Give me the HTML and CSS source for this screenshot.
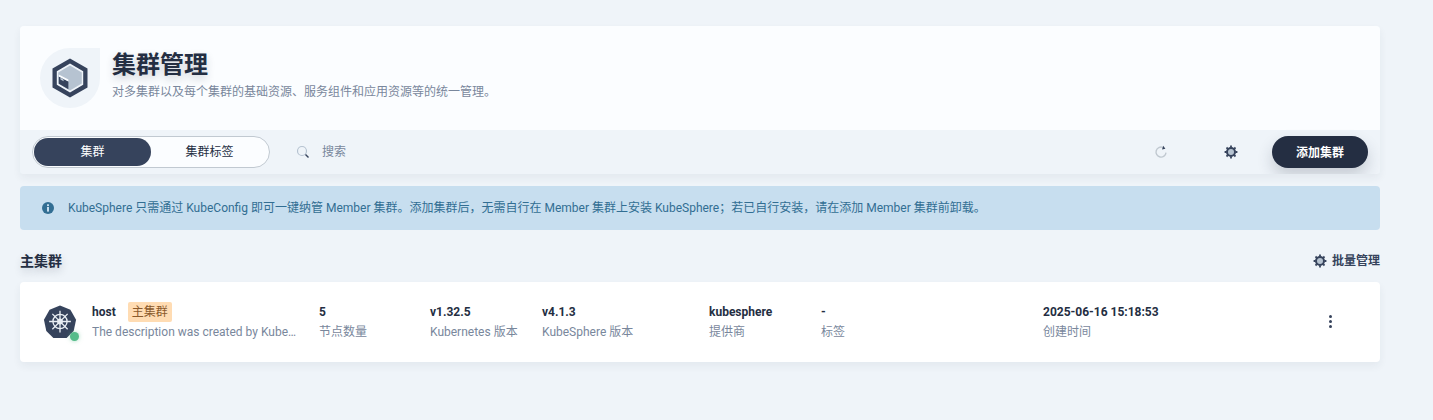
FILE: index.html
```html
<!DOCTYPE html>
<html lang="zh-CN">
<head>
<meta charset="utf-8">
<title>集群管理</title>
<link rel="stylesheet" href="styles.css">
</head>
<body>
<main class="page">
  <section class="panel">
    <header class="head">
      <div class="logo">
        <svg width="36" height="40" viewBox="0 0 36 40">
          <path d="M18 0.5 L35.5 10.5 V29.5 L18 39.5 L0.5 29.5 V10.5 Z M18 5.6 L4.8 13.2 V26.8 L18 34.4 L31.2 26.8 V13.2 Z" fill="#36435c" fill-rule="evenodd"/>
          <path d="M18 7.6 L29.8 14.4 V25.6 L18 32.4 L6.2 25.6 V14.4 Z" fill="#b6c3d1"/>
          <path d="M6.8 18.4 L16.4 23.6 V31.2 L6.8 25.8 Z" fill="#36435c"/>
          <path d="M6.8 16.4 L16.4 21.6 V23.6 L6.8 18.4 Z" fill="#fbfdff"/>
          <path d="M8.4 19.6 L11.6 21.4 V23.2 L8.4 21.4 Z" fill="#b6c3d1"/>
        </svg>
      </div>
      <div class="head-text">
        <h1 class="title">集群管理</h1>
        <p class="desc">对多集群以及每个集群的基础资源、服务组件和应用资源等的统一管理。</p>
      </div>
    </header>
    <div class="toolbar">
      <div class="tabs">
        <span class="tab tab-on">集群</span>
        <span class="tab">集群标签</span>
      </div>
      <div class="search">
        <svg width="16" height="16" viewBox="0 0 16 16">
          <circle cx="7" cy="7" r="4.5" fill="none" stroke="#b6c3d1" stroke-width="1.2"/>
          <path d="M10.5 10.5 L13.5 13.5" stroke="#36435c" stroke-width="1.4"/>
        </svg>
        <span>搜索</span>
      </div>
      <button class="icon-btn" type="button" aria-label="刷新">
        <svg width="16" height="16" viewBox="0 0 16 16">
          <path d="M9.8 3.4 A5 5 0 1 0 13 8.6" fill="none" stroke="#c1c9d1" stroke-width="1.4"/>
          <path d="M10.2 1.8 L12.4 4.8 L9 5.6 Z" fill="#36435c"/>
        </svg>
      </button>
      <button class="icon-btn gear-btn" type="button" aria-label="设置">
        <svg width="16" height="16" viewBox="0 0 16 16">
          <use href="#gear-shape"/>
        </svg>
      </button>
      <button class="add" type="button">添加集群</button>
    </div>
  </section>

  <div class="banner">
    <svg width="14" height="14" viewBox="0 0 14 14">
      <circle cx="7" cy="7" r="6" fill="#326e93"/>
      <rect x="6" y="6" width="2" height="4.6" fill="#c7ddee"/>
      <rect x="6" y="3.3" width="2" height="1.8" fill="#c7ddee"/>
    </svg>
    <span>KubeSphere 只需通过 KubeConfig 即可一键纳管 Member 集群。添加集群后，无需自行在 Member 集群上安装 KubeSphere；若已自行安装，请在添加 Member 集群前卸载。</span>
  </div>

  <div class="section-head">
    <h2 class="section-title">主集群</h2>
    <span class="batch">
      <svg width="16" height="16" viewBox="0 0 16 16"><use href="#gear-shape"/></svg>
      批量管理
    </span>
  </div>

  <article class="row">
    <div class="cell-main">
      <div class="cluster-icon">
        <svg width="34" height="34" viewBox="0 0 36 36">
          <path d="M18 0.5 L29 5 L35 15.5 L32.5 27.5 L25 35 H11 L3.5 27.5 L1 15.5 L7 5 Z" fill="#36435c"/>
          <g fill="none" stroke="#e9eef3" stroke-width="1.4">
            <circle cx="18" cy="17.5" r="7.5"/>
            <circle cx="18" cy="17.5" r="2.4"/>
            <path d="M18 6 V29 M6.5 17.5 H29.5 M9.9 9.4 L26.1 25.6 M26.1 9.4 L9.9 25.6"/>
          </g>
        </svg>
        <span class="status"></span>
      </div>
      <div class="main-text">
        <div class="name-line"><strong>host</strong><span class="tag">主集群</span></div>
        <div class="sub ellipsis">The description was created by KubeSphere automatically.</div>
      </div>
    </div>
    <div class="cell c-nodes"><strong>5</strong><span class="sub">节点数量</span></div>
    <div class="cell c-k8s"><strong>v1.32.5</strong><span class="sub">Kubernetes 版本</span></div>
    <div class="cell c-ks"><strong>v4.1.3</strong><span class="sub">KubeSphere 版本</span></div>
    <div class="cell c-prov"><strong>kubesphere</strong><span class="sub">提供商</span></div>
    <div class="cell c-label"><strong>-</strong><span class="sub">标签</span></div>
    <div class="cell c-time"><strong>2025-06-16 15:18:53</strong><span class="sub">创建时间</span></div>
    <button class="more" type="button" aria-label="更多"><i></i><i></i><i></i></button>
  </article>
</main>

<svg class="defs" width="0" height="0">
  <defs>
    <g id="gear-shape">
      <circle cx="8" cy="8" r="4" fill="#b6c3d1" stroke="#36435c" stroke-width="2"/>
      <path d="M8 1.6 V3.5 M8 12.5 V14.4 M1.6 8 H3.5 M12.5 8 H14.4 M3.5 3.5 L4.8 4.8 M11.2 11.2 L12.5 12.5 M12.5 3.5 L11.2 4.8 M4.8 11.2 L3.5 12.5" stroke="#36435c" stroke-width="1.8"/>
    </g>
  </defs>
</svg>
</body>
</html>
```

FILE: styles.css
```css
* { box-sizing: border-box; }
html, body { margin: 0; height: 420px; overflow: hidden; }
body {
  background: #eff4f9;
  color: #242e42;
  font: 12px/20px Roboto, "Noto Sans CJK SC", sans-serif;
}
.defs { position: absolute; }
.page { width: 1360px; margin-left: 20px; padding-top: 26px; }

.panel {
  border-radius: 4px;
  overflow: hidden;
  box-shadow: 0 4px 8px rgba(36, 46, 66, 0.06);
}
.head {
  height: 104px;
  background: #fbfdff;
  padding: 22px 20px;
  display: flex;
  gap: 12px;
}
.logo {
  width: 60px;
  height: 60px;
  border-radius: 50% 0 50% 50%;
  background: #eff4f9;
  display: flex;
  align-items: center;
  justify-content: center;
}
.title {
  margin: 1px 0 0;
  font-size: 24px;
  line-height: 32px;
  font-weight: 700;
  text-shadow: 0 4px 8px rgba(36, 46, 66, 0.2);
}
.desc { margin: 1px 0 0; color: #79879c; line-height: 20px; }

.toolbar {
  height: 44px;
  background: #eff4f9;
  display: flex;
  align-items: center;
  padding-left: 12px;
}
.tabs {
  width: 238px;
  height: 32px;
  padding: 1px;
  border: 1px solid #c1c9d1;
  border-radius: 16px;
  background: #fbfdff;
  display: flex;
}
.tab {
  flex: 1;
  text-align: center;
  line-height: 28px;
  border-radius: 14px;
}
.tab-on { background: #36435c; color: #fff; }
.search {
  display: flex;
  align-items: center;
  gap: 11px;
  margin-left: 25px;
  color: #79879c;
  flex: 1;
}
.icon-btn {
  width: 16px;
  height: 16px;
  padding: 0;
  border: 0;
  background: none;
  display: flex;
}
.gear-btn { margin-left: 54px; }
.add {
  width: 96px;
  height: 32px;
  margin-left: 33px;
  margin-right: 12px;
  border: 0;
  border-radius: 16px;
  background: #242e42;
  color: #fff;
  font: 700 12px/32px Roboto, "Noto Sans CJK SC", sans-serif;
  box-shadow: 0 8px 16px rgba(36, 46, 66, 0.2);
}

.banner {
  height: 44px;
  margin-top: 12px;
  border-radius: 4px;
  background: #c7deef;
  color: #326e93;
  display: flex;
  align-items: center;
  gap: 13px;
  padding-left: 21px;
}

.section-head {
  height: 20px;
  margin-top: 21px;
  display: flex;
  align-items: center;
  justify-content: space-between;
}
.section-title {
  margin: 0;
  font-size: 14px;
  font-weight: 700;
  text-shadow: 0 4px 8px rgba(36, 46, 66, 0.2);
}
.batch {
  display: flex;
  align-items: center;
  gap: 4px;
  font-weight: 700;
  color: #36435c;
}

.row {
  height: 80px;
  margin-top: 11px;
  background: #fff;
  border-radius: 4px;
  box-shadow: 0 4px 8px rgba(36, 46, 66, 0.06);
  display: flex;
  align-items: center;
  padding-left: 23px;
}
.cell-main { width: 276px; display: flex; align-items: center; gap: 15px; flex: none; }
.cluster-icon { position: relative; width: 34px; height: 34px; flex: none; }
.cluster-icon svg { display: block; }
.status {
  position: absolute;
  right: -2px;
  bottom: -2px;
  width: 9px;
  height: 9px;
  border-radius: 50%;
  background: #55bc8a;
  box-shadow: 0 0 4px rgba(85, 188, 138, 0.5);
}
.main-text { width: 205px; }
.name-line { display: flex; align-items: center; gap: 12px; }
.tag {
  background: #ffdcb3;
  color: #8a5a2b;
  border-radius: 2px;
  padding: 0 4px;
  line-height: 20px;
}
.sub { color: #79879c; display: block; line-height: 20px; }
.ellipsis { white-space: nowrap; overflow: hidden; text-overflow: ellipsis; }
strong { font-weight: 700; }
.cell { flex: none; }
.cell strong { display: block; line-height: 20px; }
.c-nodes { width: 111px; }
.c-k8s { width: 112px; }
.c-ks { width: 167px; }
.c-prov { width: 112px; }
.c-label { width: 222px; }
.c-time { width: 279px; }
.more {
  width: 16px;
  height: 16px;
  margin-bottom: 2px;
  padding: 0;
  border: 0;
  background: none;
  display: flex;
  flex-direction: column;
  align-items: center;
  justify-content: center;
  gap: 2px;
}
.more i { width: 3px; height: 3px; border-radius: 50%; background: #36435c; }
```
